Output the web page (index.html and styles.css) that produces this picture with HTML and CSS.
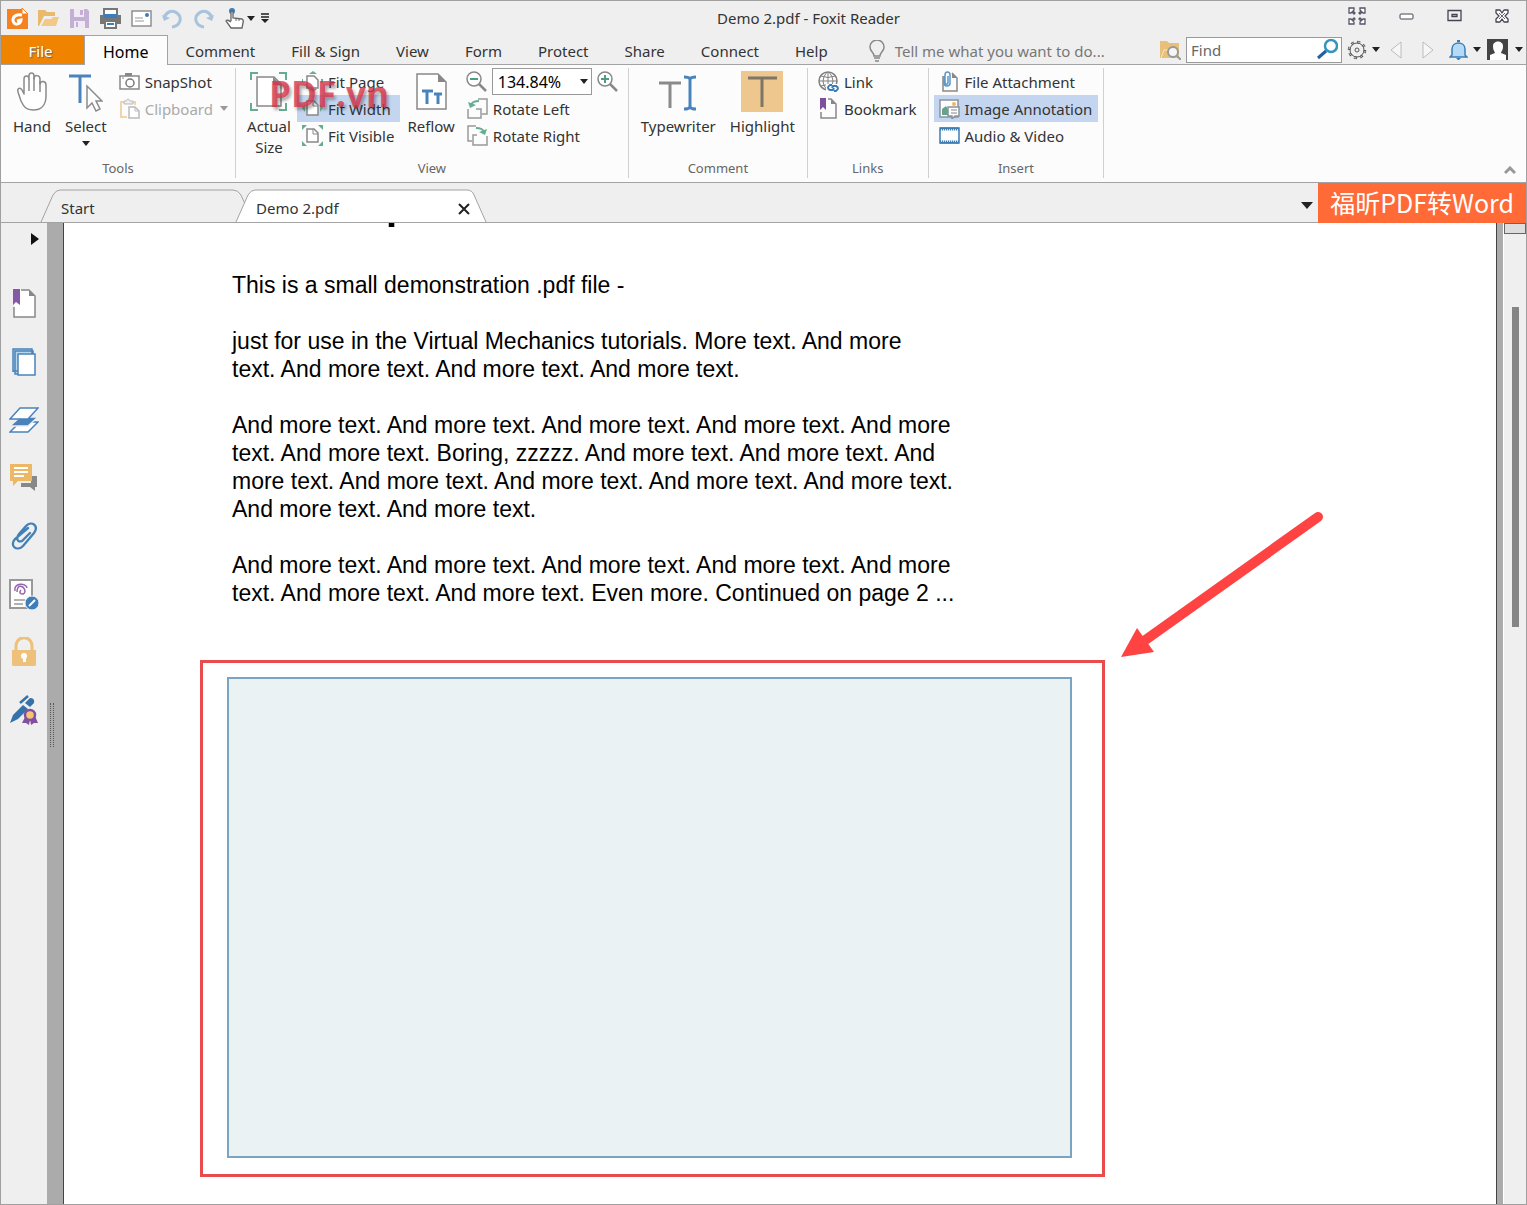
FILE: index.html
```html
<!DOCTYPE html>
<html lang="en">
<head>
    <meta charset="UTF-8">
    <title>Demo 2.pdf - Foxit Reader</title>
    <link rel="stylesheet" href="styles.css">
</head>
<body>
<div class="window">

    <header class="titlebar">
        <div class="quick-access">
            <button aria-label="Foxit Reader"><svg width="21" height="21" viewBox="0 0 21 21"><path d="M0 1h15l6 5v15H0z" fill="#f58220"/><path d="M15 0v6h6z" fill="#fff" stroke="#f58220"/><path d="M15 7c-5-1-9 1-9 5 0 6 8 5 8 0l-4 1" fill="none" stroke="#fff" stroke-width="3"/></svg></button>
            <button aria-label="Open"><svg width="21" height="21" viewBox="0 0 21 21"><path d="M0 2h7l2 2h8v4H6L1 18H0z" fill="#e9ba6b"/><path d="M3 18l4-7h6l2-2h6l-3 9z" fill="#f3c987"/></svg></button>
            <button aria-label="Save"><svg width="21" height="21" viewBox="0 0 21 21"><path d="M1 1h17l2 2v17H1z" fill="#c5b0d5"/><path d="M5 1h10v8H5zM5 13h11v7H5z" fill="#f0eaf4"/><path d="M11 2h3v5h-3zM7 14h2v5H7z" fill="#c5b0d5"/></svg></button>
            <button aria-label="Print"><svg width="21" height="21" viewBox="0 0 21 21"><path d="M4 7V1h13v6" fill="#fff" stroke="#777" stroke-width="2"/><path d="M0 7h21v9H0z" fill="#777"/><path d="M4 6h13v4H4z" fill="#3d7db8"/><path d="M5 13h11v7H5z" fill="#fff" stroke="#777" stroke-width="2"/><path d="M7 16h7" stroke="#3d7db8" stroke-width="2"/></svg></button>
            <button aria-label="Email"><svg width="21" height="21" viewBox="0 0 21 21"><path d="M1 3h19v15H1z" fill="#fff" stroke="#909090" stroke-width="1.500"/><path d="M4 10h8M4 13h9" stroke="#999"/><circle cx="16" cy="7" r="2" fill="#3d7db8"/></svg></button>
            <button aria-label="Undo"><svg width="21" height="21" viewBox="0 0 21 21"><path d="M2 10c2-6 8-9 13-5 6 5 3 13-5 14" fill="none" stroke="#a9c3dc" stroke-width="3"/><path d="M0 7l2 6 6-3z" fill="#a9c3dc"/></svg></button>
            <button aria-label="Redo"><svg width="21" height="21" viewBox="0 0 21 21"><path d="M19 10C17 4 11 1 6 5c-6 5-3 13 5 14" fill="none" stroke="#a9c3dc" stroke-width="3"/><path d="M21 7l-2 6-6-3z" fill="#a9c3dc"/></svg></button>
            <button aria-label="Touch mode"><svg width="21" height="21" viewBox="0 0 21 21"><circle cx="8" cy="3" r="3" fill="#3d7db8"/><path d="M7 13V4q1-2 2 0v6l9 1q2 1 1 4l-1 5H7l-5-7q1-2 5 1" fill="#fff" stroke="#666" stroke-width="1.300"/><path d="M12 11v2m3-2v2" stroke="#666"/></svg></button>
            <span class="caret"></span>
            <button class="customize" aria-label="Customize toolbar"><svg width="8" height="10" viewBox="0 0 8 10"><path d="M0 1h8M0 4h8" stroke="#222" stroke-width="1.500"/><path d="M0 6h8L4 10z" fill="#222"/></svg></button>
        </div>
        <div class="window-title">Demo 2.pdf - Foxit Reader</div>
        <div class="window-controls">
            <button aria-label="Full screen"><svg width="18" height="18" viewBox="0 0 18 18" fill="#fff" stroke="#556"><path d="M1 1h5v2L5 4l2 2-1 1-2-2-1 1H1zM17 1h-5v2l1 1-2 2 1 1 2-2 1 1h2zM1 17h5v-2l-1-1 2-2-1-1-2 2-1-1H1zM17 17h-5v-2l1-1-2-2 1-1 2 2 1-1h2z" stroke-width="1.300"/></svg></button>
            <button aria-label="Minimize"><svg width="15" height="14" viewBox="0 0 15 14"><rect x="1" y="5" width="13" height="5" rx="1" fill="#fff" stroke="#445"/></svg></button>
            <button aria-label="Maximize"><svg width="15" height="14" viewBox="0 0 15 14" fill="none" stroke="#445"><path d="M1 1.500h13v10H1zM5 5.500h5v2H5z" stroke-width="1.300"/></svg></button>
            <button aria-label="Close window"><svg width="14" height="14" viewBox="0 0 14 14" stroke-linejoin="round"><path d="M1 1h4l2 3 2-3h4v3l-3 3 3 3v3H9l-2-3-2 3H1v-3l3-3-3-3z" fill="#fff" stroke="#445" stroke-width="1.300"/><path d="M4 4l6 6m0-6l-6 6" stroke="#667"/></svg></button>
        </div>
    </header>

    <nav class="menubar">
        <button class="menu-tab file-tab">File</button>
        <button class="menu-tab active">Home</button>
        <button class="menu-tab">Comment</button>
        <button class="menu-tab">Fill &amp; Sign</button>
        <button class="menu-tab">View</button>
        <button class="menu-tab">Form</button>
        <button class="menu-tab">Protect</button>
        <button class="menu-tab">Share</button>
        <button class="menu-tab">Connect</button>
        <button class="menu-tab">Help</button>
        <button class="tell-me"><svg width="16" height="22" viewBox="0 0 16 22" fill="none" stroke="#888"><path d="M5 16c0-4-4-4-4-9a7 7 0 0114 0c0 5-4 5-4 9zM5 18h6M6 21h4" stroke-width="1.500"/></svg>Tell me what you want to do...</button>
        <div class="menu-tools">
            <button aria-label="Search folder"><svg width="21" height="21" viewBox="0 0 21 21"><path d="M0 2h7l2 2h10v15H0z" fill="#e9c07a"/><path d="M1 19l3-8h5" stroke="#f8e6c4" fill="none"/><circle cx="13" cy="13" r="5" fill="#f5f5f5" stroke="#999" stroke-width="2"/><path d="M17 17l4 4" stroke="#999" stroke-width="2"/></svg></button>
            <label class="find-box">
                <input type="text" placeholder="Find" aria-label="Find">
                <svg width="21" height="21" viewBox="0 0 21 21" fill="none"><circle cx="14" cy="7" r="6" stroke="#3596bd" stroke-width="2.500"/><path d="M9 12l-8 7" stroke="#265f9e" stroke-width="3"/></svg>
            </label>
            <button class="gear" aria-label="Settings"><svg width="20" height="20" viewBox="0 0 20 20" fill="none" stroke="#555"><circle cx="10" cy="10" r="8" stroke-width="2.500" stroke-dasharray="3 3.280"/><circle cx="10" cy="10" r="7"/><circle cx="10" cy="10" r="2"/><circle cx="10" cy="10" r="8" stroke="#f4f4f4" stroke-width="1" stroke-dasharray="1.500 4.780" stroke-dashoffset="-1"/></svg><span class="caret"></span></button>
            <button class="step" aria-label="Previous"><svg width="12" height="18" viewBox="0 0 12 18"><path d="M11 1v16L1 9z" fill="#f7f7f7" stroke="#bbb"/></svg></button>
            <button class="step" aria-label="Next"><svg width="12" height="18" viewBox="0 0 12 18"><path d="M1 1v16l10-8z" fill="#f7f7f7" stroke="#bbb"/></svg></button>
            <button class="bell" aria-label="Notifications"><svg width="19" height="20" viewBox="0 0 19 20"><path d="M3 15V9c0-8 13-8 13 0v6l2 2H1z" fill="#b5daf7" stroke="#3a7db5" stroke-width="1.500"/><path d="M8 2V0h3v2M7 18h5l-2 2H9z" fill="#3a7db5"/></svg><span class="caret"></span></button>
            <button class="account" aria-label="Account"><svg width="21" height="21" viewBox="0 0 21 21"><path d="M0 0h21v21H0z" fill="#444"/><path d="M6 7c0-6 10-6 10 0 0 4-1 4-2 7l5 2v5H3v-5l5-2C7 11 6 11 6 7z" fill="#fff"/></svg><span class="caret"></span></button>
        </div>
    </nav>

    <section class="ribbon">
        <div class="group">
            <div class="group-tools">
                <button class="large"><svg width="33" height="41" viewBox="0 0 33 41" fill="#fff" stroke="#8b8b8b" stroke-width="1.500" stroke-linejoin="round"><path d="M8 23V8c0-4 5-4 5 0V5c0-4 5-4 5 0v3c0-5 6-4 6 0v5c1-4 6-3 6 1v11c0 9-5 14-13 14-7 0-9-3-12-9L2 21c-1-4 2-5 4-2z"/><path d="M13 8v12M18 6v14M24 10v11" fill="none"/></svg><span>Hand</span></button>
                <button class="large"><svg width="35" height="41" viewBox="0 0 35 41" fill="none"><path d="M1 5h22M12 5v27" stroke="#4a83bb" stroke-width="3"/><path d="M19 15v22l5-5 4 8 4-2-4-8h6z" fill="#fff" stroke="#8b8b8b" stroke-width="1.500"/></svg><span>Select</span><span class="caret"></span></button>
                <div class="column">
                    <button class="small"><svg width="21" height="21" viewBox="0 0 21 21"><path d="M6 2h7v3H6z" fill="#888"/><path d="M1 5h19v13H1z" fill="#fff" stroke="#888" stroke-width="1.500"/><circle cx="11" cy="12" r="4" fill="none" stroke="#777" stroke-width="1.500"/><path d="M3 7h2" stroke="#888"/></svg>SnapShot</button>
                    <button class="small disabled" disabled><svg width="21" height="21" viewBox="0 0 21 21"><path d="M8 19H2V4h14v3" fill="none" stroke="#f2d4a8" stroke-width="2"/><path d="M5 3h2q2-4 4 0h3v3H5z" fill="#eee" stroke="#bbb"/><path d="M10 9h6l4 4v7H10z" fill="#fff" stroke="#bbb" stroke-width="1.500"/><path d="M16 9v4h4" fill="none" stroke="#bbb"/></svg>Clipboard<span class="caret"></span></button>
                </div>
            </div>
            <div class="group-name">Tools</div>
        </div>

        <div class="group">
            <div class="group-tools">
                <button class="large two-line"><svg width="37" height="41" viewBox="0 0 37 41" fill="none"><path d="M1 9V2h7M29 2h7v7M1 32v7h7M29 39h7v-7" stroke="#67ac91" stroke-width="2"/><path d="M7 6h17l7 7v22H7z" fill="#fff" stroke="#888" stroke-width="1.500"/><path d="M23 6v8h8z" fill="#888"/></svg><span>Actual Size</span></button>
                <div class="column">
                    <button class="small"><svg width="21" height="21" viewBox="0 0 21 21"><path d="M7 3l4-3 4 3M7 18l4 3 4-3" fill="#67ac91"/><path d="M5 5h7l4 4v8H5z" fill="#fff" stroke="#888" stroke-width="1.500"/><path d="M0 8v4M20 8v4" stroke="#67ac91" stroke-width="2"/></svg>Fit Page</button>
                    <button class="small selected"><svg width="21" height="21" viewBox="0 0 21 21"><path d="M3 6l-3 4 3 4M18 6l3 4-3 4" fill="#67ac91"/><path d="M5 3h7l4 4v10H5z" fill="#fff" stroke="#888" stroke-width="1.500"/><path d="M11 3v5h5" fill="none" stroke="#888"/></svg>Fit Width</button>
                    <button class="small"><svg width="21" height="21" viewBox="0 0 21 21"><path d="M0 0h5L0 5zM21 0h-5l5 5zM0 21h5l-5-5zM21 21h-5l5-5z" fill="#67ac91"/><path d="M5 4h7l4 4v9H5z" fill="#fff" stroke="#888" stroke-width="1.500"/><path d="M11 4v5h5" fill="none" stroke="#888"/></svg>Fit Visible</button>
                </div>
                <button class="large"><svg width="31" height="41" viewBox="0 0 31 41" fill="none"><path d="M1 3h21l8 8v27H1z" fill="#fff" stroke="#888" stroke-width="1.500"/><path d="M22 3v8h8z" fill="#888"/><path d="M6 20h11M11 20v13M18 23h8M22 23v10" stroke="#4a83bb" stroke-width="3"/></svg><span>Reflow</span></button>
                <div class="column">
                    <div class="zoom-row">
                        <button aria-label="Zoom out"><svg width="21" height="21" viewBox="0 0 21 21"><circle cx="8" cy="8" r="7" fill="#fff" stroke="#888" stroke-width="1.500"/><path d="M13 13l7 7" stroke="#888" stroke-width="2.500"/><path d="M4 8h8" stroke="#4b9e7e" stroke-width="2"/></svg></button>
                        <div class="zoom-box"><select aria-label="Zoom level"><option>134.84%</option></select><span class="caret"></span></div>
                        <button aria-label="Zoom in"><svg width="21" height="21" viewBox="0 0 21 21"><circle cx="8" cy="8" r="7" fill="#fff" stroke="#888" stroke-width="1.500"/><path d="M13 13l7 7" stroke="#888" stroke-width="2.500"/><path d="M4 8h8M8 4v8" stroke="#4b9e7e" stroke-width="2"/></svg></button>
                    </div>
                    <button class="small"><svg width="21" height="21" viewBox="0 0 21 21" fill="none"><path d="M11 1h9v15h-5M1 11v9h13v-9H9" stroke="#999" stroke-width="1.500"/><path d="M12 3C7 3 5 4 4 7" stroke="#67ac91" stroke-width="2"/><path d="M1 4l2 6 6-3z" fill="#67ac91"/></svg>Rotate Left</button>
                    <button class="small"><svg width="21" height="21" viewBox="0 0 21 21" fill="none"><path d="M9 1H1v15h4M10 10H6v10h14v-9" stroke="#999" stroke-width="1.500"/><path d="M9 3c5 0 7 1 8 4" stroke="#67ac91" stroke-width="2"/><path d="M20 4l-2 6-6-3z" fill="#67ac91"/></svg>Rotate Right</button>
                </div>
            </div>
            <div class="group-name">View</div>
            <div class="watermark">PDF.vn</div>
        </div>

        <div class="group">
            <div class="group-tools">
                <button class="large"><svg width="38" height="41" viewBox="0 0 38 41" fill="none"><path d="M0 12h22M11 12v25" stroke="#8a8a8a" stroke-width="3"/><path d="M25 6q5 0 6 2 1-2 6-2M31 7v30M25 38q5 0 6-2 1 2 6 2" stroke="#4a83bb" stroke-width="3"/></svg><span>Typewriter</span></button>
                <button class="large"><svg width="42" height="41" viewBox="0 0 42 41"><path d="M0 0h42v41H0z" fill="#edc78d"/><path d="M7 7h29M21 7v29" stroke="#7d7668" stroke-width="3"/></svg><span>Highlight</span></button>
            </div>
            <div class="group-name">Comment</div>
        </div>

        <div class="group">
            <div class="group-tools">
                <div class="column">
                    <button class="small"><svg width="21" height="21" viewBox="0 0 21 21" fill="none"><circle cx="10" cy="10" r="9" stroke="#808080" stroke-width="1.500"/><path d="M1 10h18M3 5q7 3 14 0M3 15q7-3 14 0M10 1v18M9 1q-8 9 0 18M11 1q8 9 0 18" stroke="#808080"/><path d="M8 13h13v8H8z" fill="#fff"/><path d="M14 14h-2q-4 3 0 5h3l1-2M16 20h2q4-3 0-5h-3l-1 2" stroke="#3d7db8" stroke-width="2"/></svg>Link</button>
                    <button class="small"><svg width="21" height="21" viewBox="0 0 21 21" fill="none"><path d="M10 1h3l5 5v14H3v-6" stroke="#888" stroke-width="1.500"/><path d="M13 1v5h5z" fill="#888"/><path d="M2 0h6v12l-3-3-3 3z" fill="#7c509d"/></svg>Bookmark</button>
                </div>
            </div>
            <div class="group-name">Links</div>
        </div>

        <div class="group">
            <div class="group-tools">
                <div class="column">
                    <button class="small"><svg width="21" height="21" viewBox="0 0 21 21" fill="none"><path d="M4 5v15h14V7l-5-5" stroke="#888" stroke-width="1.500"/><path d="M13 2v5h5z" fill="#888"/><path d="M5 5v7c0 4 6 4 6 0V4c0-4-5-4-5 0v7c0 3 3 3 3 0V5" stroke="#5b97c7" stroke-width="1.500"/></svg>File Attachment</button>
                    <button class="small selected"><svg width="21" height="21" viewBox="0 0 21 21"><path d="M1 2h18v17H1z" fill="#fff" stroke="#8b929c" stroke-width="1.500"/><path d="M3 17v-6l4-3 5 9z" fill="#63a58b"/><circle cx="15" cy="6" r="2" fill="#efb65d"/><path d="M9 9h11v9h-4l-3 3v-3H9z" fill="#fff" stroke="#8b929c" stroke-width="1.500"/><path d="M12 12h6M12 15h6" stroke="#888"/></svg>Image Annotation</button>
                    <button class="small"><svg width="21" height="21" viewBox="0 0 21 21"><path d="M1 3h19v15H1z" fill="#fff" stroke="#3d7db8" stroke-width="1.500"/><path d="M1 4h19M1 17h19" stroke="#3d7db8" stroke-width="3"/><path d="M2 5h18M2 16h18" stroke="#fff" stroke-width="1.500" stroke-dasharray="1 1"/></svg>Audio &amp; Video</button>
                </div>
            </div>
            <div class="group-name">Insert</div>
        </div>
        <button class="collapse" aria-label="Collapse ribbon"><svg width="12" height="9" viewBox="0 0 12 9"><path d="M1 7l5-5 5 5" fill="none" stroke="#999" stroke-width="3"/></svg></button>
    </section>

    <div class="doc-tabs">
        <button class="doc-tab">
            <svg viewBox="0 0 206 33"><path d="M0 33L12 6q3-5 7-5h173q5 0 8 5l12 27" fill="#efefef" stroke="#a3a3a3"/></svg>
            <span>Start</span>
        </button>
        <div class="doc-tab current">
            <svg viewBox="0 0 250 33"><path d="M0 33L12 6q3-5 7-5h212q5 0 7 5l12 27" fill="#fff" stroke="#a3a3a3"/></svg>
            <span>Demo 2.pdf</span>
            <button class="tab-close" aria-label="Close tab"><svg width="12" height="12" viewBox="0 0 12 12"><path d="M1 1l10 10M11 1L1 11" stroke="#222" stroke-width="2"/></svg></button>
        </div>
        <button class="tab-list" aria-label="List tabs"><span class="caret big"></span></button>
        <a class="promo" href="#">福昕PDF转Word</a>
    </div>

    <main class="workspace">
        <aside class="sidebar">
            <button class="expand" aria-label="Expand panel"><svg width="8" height="12" viewBox="0 0 8 12"><path d="M0 0v12l8-6z" fill="#111"/></svg></button>
            <button aria-label="Bookmarks"><svg width="24" height="30" viewBox="0 0 24 30"><path d="M9 1h8l6 6v21H2V18" fill="#fff" stroke="#888" stroke-width="1.500"/><path d="M2 1h7v17H2z" fill="#fff"/><path d="M17 1v6h6z" fill="#888"/><path d="M1 0h7v16l-4-3-3 3z" fill="#8659a6"/></svg></button>
            <button aria-label="Pages"><svg width="26" height="30" viewBox="0 0 26 30" fill="#b8d5ec" stroke="#4a83bb" stroke-width="1.500"><path d="M2 25V2h19v22H2zM4 27V4h18v23z"/><path d="M7 7h17v21H7z" fill="#fff"/></svg></button>
            <button aria-label="Layers"><svg width="30" height="28" viewBox="0 0 30 28" stroke="#4a83bb" stroke-width="1.500"><path d="M1 26L11 16h18L19 26z" fill="#fff"/><path d="M1 20l10-9h18l-10 9z" fill="#4a83bb" stroke="#efefef"/><path d="M1 13L11 2h18L19 13z" fill="#fff"/></svg></button>
            <button aria-label="Comments"><svg width="28" height="28" viewBox="0 0 28 28"><path d="M21 12h6v11h-2v4l-5-4h-9v-4h10z" fill="#888"/><path d="M0 0h22v17H8l-5 5v-5H0z" fill="#edb866"/><path d="M4 4h14M4 8h14M4 12h10" stroke="#fff" stroke-width="2"/></svg></button>
            <button aria-label="Attachments"><svg width="26" height="28" viewBox="0 0 26 28" fill="none" stroke="#4280b8" stroke-width="2.300" stroke-linecap="round"><path d="M17 6L4 17c-6 7 2 13 8 7L23 11c5-7-2-13-8-7L8 12c-3 4-2 9 3 7l8-8"/></svg></button>
            <button aria-label="Signatures"><svg width="30" height="32" viewBox="0 0 30 32" fill="none"><path d="M1 2h22v28H1z" fill="#fff" stroke="#999" stroke-width="2"/><path d="M6 13c-2-8 11-9 12-3M8 14c0-9 7-6 8-1 0 5-8 3-4-1" stroke="#9565ad" stroke-width="1.500"/><path d="M5 22h11M5 26h9" stroke="#999" stroke-width="1.500"/><circle cx="23" cy="25" r="7" fill="#3d7db8" stroke="#efefef"/><path d="M20 28l6-6" stroke="#fff" stroke-width="2"/></svg></button>
            <button aria-label="Security"><svg width="24" height="30" viewBox="0 0 24 30"><path d="M4 14V9c0-11 16-11 16 0v5" fill="none" stroke="#edc07b" stroke-width="3"/><path d="M0 13h24v15q0 1-2 1H2q-2 0-2-1z" fill="#edc07b"/><circle cx="12" cy="19" r="3" fill="#fff"/><path d="M11 20h3v5h-3z" fill="#fff"/></svg></button>
            <button aria-label="Digital signatures"><svg width="28" height="30" viewBox="0 0 28 30"><path d="M0 28l3-8L13 10l5 4L8 24z" fill="#3472ab"/><path d="M15 8l5-5q5 0 4 5l-4 4z" fill="#3472ab"/><path d="M10 8l8-7" stroke="#3472ab" stroke-width="2.500"/><path d="M15 22l-3 6h4l3 2 1-6 1 6 3-2h4l-3-7z" fill="#83509d"/><circle cx="20" cy="20" r="5" fill="#f3c574" stroke="#83509d" stroke-width="2.500"/></svg></button>
        </aside>
        <div class="splitter"><span class="grip"></span></div>
        <article class="page">
            <h1>A Simple PDF File</h1>
            <div class="text">
                <p>This is a small demonstration .pdf file -</p>
                <p>just for use in the Virtual Mechanics tutorials. More text. And more<br>
                text. And more text. And more text. And more text.</p>
                <p>And more text. And more text. And more text. And more text. And more<br>
                text. And more text. Boring, zzzzz. And more text. And more text. And<br>
                more text. And more text. And more text. And more text. And more text.<br>
                And more text. And more text.</p>
                <p>And more text. And more text. And more text. And more text. And more<br>
                text. And more text. And more text. Even more. Continued on page 2 ...</p>
            </div>
            <div class="marker">
                <div class="image-area"></div>
                <svg class="pointer" width="210" height="150" viewBox="0 0 210 150"><path d="M201 7L27 131" stroke="#ff4343" stroke-width="10" stroke-linecap="round"/><path d="M4 147l16-29 17 24z" fill="#ff4343"/></svg>
            </div>
        </article>
        <div class="scrollbar">
            <span class="scroll-split"></span>
            <span class="scroll-thumb"></span>
        </div>
    </main>

</div>
</body>
</html>
```
FILE: styles.css
```css
* {
    box-sizing: border-box;
}

body {
    margin: 0;
    font-family: "Noto Sans", Tahoma, sans-serif;
    font-size: 15px;
    color: #333;
}

button, input, select {
    font: inherit;
    color: inherit;
}

button {
    border: none;
    background: none;
    padding: 0;
    white-space: nowrap;
}

svg {
    display: block;
    flex-shrink: 0;
}

.window {
    display: flex;
    flex-direction: column;
    height: 100vh;
    border: 1px solid #a0a0a0;
    background: #efefef;
    overflow: hidden;
}

/* small down arrow */
.caret {
    flex-shrink: 0;
    border: 4px solid transparent;
    border-top: 5px solid #222;
    border-bottom: none;
}

.caret.big {
    border-width: 7px 6px 0;
}

/* Title bar */
.titlebar {
    display: flex;
    align-items: center;
    height: 34px;
    flex-shrink: 0;
}

.quick-access {
    display: flex;
    align-items: center;
    gap: 10px;
    padding-left: 6px;
}

.quick-access .caret {
    margin: 0 -4px 0 -8px;
}

.window-title {
    flex: 1;
    text-align: center;
}

.window-controls {
    display: flex;
    align-items: center;
    gap: 33px;
    padding: 0 17px 4px 0;
}

/* Menu tabs */
.menubar {
    display: flex;
    height: 30px;
    flex-shrink: 0;
    border-bottom: 1px solid #a3a3a3;
}

.menu-tab {
    padding: 3px 18px 0;
}

.file-tab {
    width: 83px;
    padding-right: 22px;
    background: #f08300;
    color: #fff;
    text-shadow: 1px 1px 1px #666;
}

.menu-tab.active {
    height: 30px;
    border: 1px solid #a3a3a3;
    border-bottom: none;
    background: #fcfcfc;
    color: #000;
    font-size: 16px;
    padding: 2px 18px 0;
}

.tell-me {
    display: flex;
    align-items: center;
    gap: 10px;
    padding: 3px 0 0 23px;
    color: #777;
}

.menu-tools {
    display: flex;
    align-items: center;
    margin-left: auto;
    padding-right: 3px;
}

.find-box {
    display: flex;
    align-items: center;
    width: 156px;
    height: 26px;
    margin: 0 5px;
    padding: 0 3px 0 4px;
    border: 1px solid #999;
    background: #fff;
}

.find-box input {
    flex: 1;
    min-width: 0;
    border: none;
    padding: 0;
    outline: none;
    background: none;
}

.find-box input::placeholder {
    color: #666;
}

.gear, .bell, .account {
    display: flex;
    align-items: center;
    gap: 5px;
}

.step {
    margin-left: 10px;
}

.step + .step {
    margin: 0 15px 0 20px;
}

.account {
    gap: 7px;
    margin-left: 6px;
}

/* Ribbon */
.ribbon {
    display: flex;
    height: 118px;
    flex-shrink: 0;
    padding: 3px 0 4px;
    border-bottom: 1px solid #a3a3a3;
    background: #fcfcfc;
}

.group {
    position: relative;
    display: flex;
    flex-direction: column;
    justify-content: space-between;
    padding: 0 5px;
    border-right: 1px solid #d0d0d0;
}

.group-tools {
    display: flex;
    align-items: flex-start;
}

.group-name {
    font-size: 13px;
    line-height: 19px;
    text-align: center;
    color: #666;
}

.large {
    display: flex;
    flex-direction: column;
    align-items: center;
    padding: 3px 7px 0;
    line-height: 21px;
}

.large svg {
    margin-bottom: 4px;
}

.large .caret {
    margin-top: 4px;
}

.two-line {
    width: 56px;
    white-space: normal;
}

.column {
    display: flex;
    flex-direction: column;
}

.small {
    display: flex;
    align-items: center;
    gap: 5px;
    height: 27px;
    padding: 0 6px 0 5px;
}

.small.selected {
    background: #c4d5f0;
}

.small.disabled {
    color: #aaa;
    padding-right: 2px;
}

.disabled .caret {
    margin-left: 2px;
    border-top-color: #999;
}

.zoom-row {
    display: flex;
    align-items: center;
    gap: 5px;
    height: 27px;
    padding: 0 5px 0 4px;
}

.zoom-box {
    display: flex;
    align-items: center;
    width: 100px;
    height: 27px;
    padding: 0 3px 0 5px;
    border: 1px solid #999;
    background: #fff;
    color: #000;
    font-size: 16px;
}

.zoom-box select {
    flex: 1;
    min-width: 0;
    appearance: none;
    border: none;
    padding: 0;
    background: none;
}

.watermark {
    position: absolute;
    left: 33px;
    top: 2px;
    font-family: "Open Sans", sans-serif;
    font-size: 35px;
    font-weight: bold;
    line-height: 48px;
    color: rgba(218, 52, 75, 0.8);
    text-shadow: 2px 3px 3px rgba(0, 0, 0, 0.3);
    pointer-events: none;
}

.collapse {
    align-self: flex-end;
    margin: 0 10px 3px auto;
}

/* Document tabs */
.doc-tabs {
    display: flex;
    align-items: flex-end;
    height: 40px;
    flex-shrink: 0;
    padding-left: 40px;
    border-bottom: 1px solid #a3a3a3;
}

.doc-tab {
    position: relative;
    display: flex;
    align-items: center;
    width: 195px;
    height: 33px;
    padding: 4px 16px 0 20px;
}

.doc-tab > svg {
    position: absolute;
    left: 0;
    top: 0;
    height: 33px;
    overflow: visible;
}

.doc-tab span {
    position: relative;
}

.doc-tab.current {
    width: 250px;
}

.tab-close {
    position: relative;
    margin: 3px 0 0 auto;
}

.tab-list {
    align-self: center;
    margin: 5px 5px 0 auto;
}

.tab-list .caret {
    display: block;
}

.promo {
    align-self: flex-start;
    height: 40px;
    padding: 0 12px;
    background: #ff6a36;
    color: #fff;
    font-family: "Noto Sans CJK SC", sans-serif;
    font-size: 25px;
    line-height: 38px;
    text-decoration: none;
}

/* Workspace */
.workspace {
    display: flex;
    flex: 1;
    min-height: 0;
}

.sidebar {
    width: 46px;
    flex-shrink: 0;
}

.sidebar button {
    display: flex;
    align-items: center;
    justify-content: center;
    width: 46px;
    height: 58px;
}

.sidebar .expand {
    height: 52px;
    padding: 0 0 20px 21px;
}

.splitter {
    display: flex;
    align-items: center;
    width: 17px;
    flex-shrink: 0;
    padding: 22px 0 0 3px;
    border-right: 1px solid #444;
    background: #ababab;
}

.grip {
    width: 4px;
    height: 44px;
    border: 1px dotted #555;
    border-width: 0 1px;
}

.page {
    flex: 1;
    min-width: 0;
    overflow: hidden;
    padding-left: 136px;
    background: #fff;
    color: #000;
    font-family: "Liberation Sans", Arial, sans-serif;
}

.page h1 {
    margin: -67px 0 0 20px;
    font-size: 63px;
    font-weight: normal;
    line-height: 72px;
}

.text {
    padding: 43px 0 0 32px;
    font-size: 23px;
    line-height: 28px;
    white-space: nowrap;
}

.text p {
    margin: 0 0 28px;
}

/* red frame around the image annotation */
.marker {
    position: relative;
    max-width: 905px;
    margin-top: 53px;
    padding: 14px 30px 16px 24px;
    border: 3px solid #e84c4c;
}

.image-area {
    height: 481px;
    border: 2px solid #7ba4c0;
    background: #eaf2f4;
}

.pointer {
    position: absolute;
    left: 914px;
    top: -153px;
}

.scrollbar {
    width: 30px;
    flex-shrink: 0;
    border-left: 1px solid #444;
    background: linear-gradient(to right, #ababab 6px, #fff 6px, #fff 7px, #efefef 7px);
}

.scroll-split {
    display: block;
    height: 11px;
    margin-left: 7px;
    border: 1px solid #666;
    background: #ddd;
}

.scroll-thumb {
    display: block;
    width: 7px;
    height: 320px;
    margin: 73px 0 0 15px;
    background: #858585;
}
```
